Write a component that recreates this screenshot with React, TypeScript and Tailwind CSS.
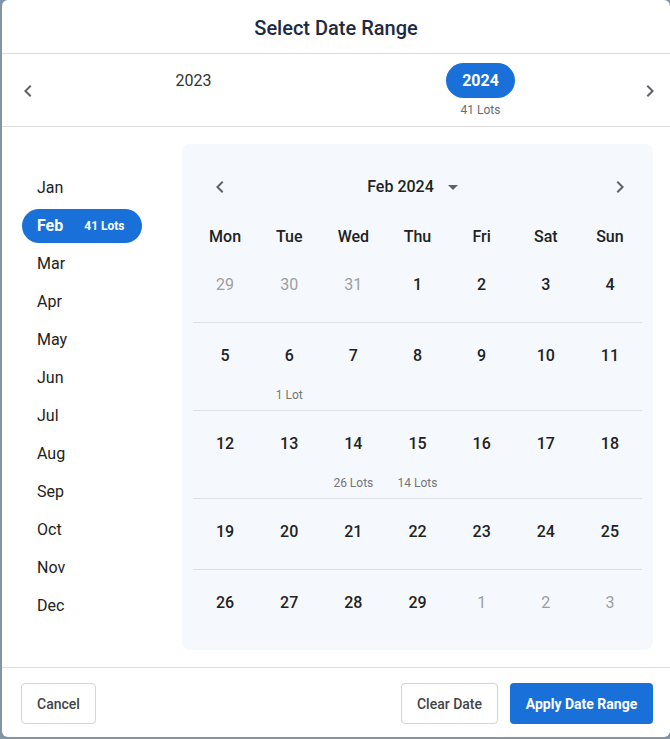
import clsx from 'clsx';

type Day = { d: number; muted?: boolean; lots?: string };

const months = ['Jan', 'Feb', 'Mar', 'Apr', 'May', 'Jun', 'Jul', 'Aug', 'Sep', 'Oct', 'Nov', 'Dec'];
const weekdays = ['Mon', 'Tue', 'Wed', 'Thu', 'Fri', 'Sat', 'Sun'];

const weeks: Day[][] = [
  [{ d: 29, muted: true }, { d: 30, muted: true }, { d: 31, muted: true }, { d: 1 }, { d: 2 }, { d: 3 }, { d: 4 }],
  [{ d: 5 }, { d: 6, lots: '1 Lot' }, { d: 7 }, { d: 8 }, { d: 9 }, { d: 10 }, { d: 11 }],
  [{ d: 12 }, { d: 13 }, { d: 14, lots: '26 Lots' }, { d: 15, lots: '14 Lots' }, { d: 16 }, { d: 17 }, { d: 18 }],
  [{ d: 19 }, { d: 20 }, { d: 21 }, { d: 22 }, { d: 23 }, { d: 24 }, { d: 25 }],
  [{ d: 26 }, { d: 27 }, { d: 28 }, { d: 29 }, { d: 1, muted: true }, { d: 2, muted: true }, { d: 3, muted: true }],
];

function ChevronLeft() {
  return (
    <svg width="24" height="24" viewBox="0 0 24 24" fill="#5f6368">
      <path d="M15.41 7.41L14 6l-6 6 6 6 1.41-1.41L10.83 12z" />
    </svg>
  );
}

function ChevronRight() {
  return (
    <svg width="24" height="24" viewBox="0 0 24 24" fill="#5f6368">
      <path d="M10 6L8.59 7.41 13.17 12l-4.58 4.59L10 18l6-6z" />
    </svg>
  );
}

function ArrowDrop() {
  return (
    <svg width="24" height="24" viewBox="0 0 24 24" fill="#616161">
      <path d="M7 10l5 5 5-5z" />
    </svg>
  );
}

export default function App() {
  return (
    <div className="h-[739px] bg-[#8394a6] pl-[2px] font-['Roboto',sans-serif]">
      <div className="flex h-[737px] w-[668px] flex-col rounded-[6px] bg-white">
        {/* title */}
        <div className="flex h-[54px] items-center justify-center border-b border-[#dedede] pt-[3px]">
          <h2 className="text-[20px] font-medium text-[#1c2b45]">Select Date Range</h2>
        </div>

        {/* years */}
        <div className="flex h-[73px] border-b border-[#dedede]">
          <button className="flex w-[48px] items-center justify-center pl-[4px] pt-[2px]">
            <ChevronLeft />
          </button>
          <div className="grid w-[574px] grid-cols-2">
            <div className="flex flex-col items-center pt-[9px]">
              <div className="flex h-[35px] items-center text-base text-[#333]">2023</div>
            </div>
            <div className="flex flex-col items-center pt-[9px]">
              <div className="flex h-[35px] items-center rounded-full bg-[#1a70d9] px-[16px] text-base font-bold text-white">
                2024
              </div>
              <div className="mt-[4px] text-xs leading-[16px] text-[#6b6b6b]">41 Lots</div>
            </div>
          </div>
          <button className="flex flex-1 items-center pl-[14px] pt-[2px]">
            <ChevronRight />
          </button>
        </div>

        {/* body */}
        <div className="flex flex-1 py-[17px] pl-[20px] pr-[17px]">
          <ul className="w-[160px] pt-[25px]">
            {months.map((m) => (
              <li key={m} className="h-[38px] w-[120px] py-[2px]">
                {m === 'Feb' ? (
                  <div className="flex h-[34px] items-center rounded-full bg-[#1a70d9] px-[15px] text-white">
                    <span className="text-base font-bold">Feb</span>
                    <span className="ml-[21px] text-xs font-bold">41 Lots</span>
                  </div>
                ) : (
                  <div className="flex h-[34px] items-center px-[15px] text-base text-[#222]">{m}</div>
                )}
              </li>
            ))}
          </ul>

          <div className="flex-1 rounded-[8px] bg-[#f5f9fd] px-[11px] pt-[31px]">
            <div className="flex h-[24px] items-center justify-between pl-[15px] pr-[10px]">
              <ChevronLeft />
              <div className="mr-[8px] flex items-center gap-[7px]">
                <span className="text-base font-medium text-[#222]">Feb 2024</span>
                <ArrowDrop />
              </div>
              <ChevronRight />
            </div>

            <div className="mt-[26px] grid h-[24px] grid-cols-7 items-center">
              {weekdays.map((w) => (
                <div key={w} className="text-center text-base font-medium text-[#222]">
                  {w}
                </div>
              ))}
            </div>

            <div className="mt-[3px]">
              {weeks.map((week, i) => {
                const hasLots = week.some((day) => day.lots);
                return (
                  <div
                    key={i}
                    className={clsx(
                      'grid grid-cols-7 pt-[22px]',
                      i < weeks.length - 1 && 'border-b border-[#dde1e5]',
                      hasLots ? 'pb-[7px]' : 'pb-[26px]'
                    )}
                  >
                    {week.map((day, j) => (
                      <div key={j} className="flex flex-col items-center">
                        <span
                          className={clsx(
                            'text-base leading-[22px]',
                            day.muted ? 'text-[#9e9e9e]' : 'font-medium text-[#222]'
                          )}
                        >
                          {day.d}
                        </span>
                        {hasLots && (
                          <span className="mt-[20px] h-[16px] text-xs leading-[16px] text-[#757575]">
                            {day.lots ?? ''}
                          </span>
                        )}
                      </div>
                    ))}
                  </div>
                );
              })}
            </div>
          </div>
        </div>

        {/* footer */}
        <div className="flex items-start border-t border-[#dedede] pb-[13px] pl-[19px] pr-[17px] pt-[15px]">
          <button className="h-[41px] w-[75px] rounded-[4px] border border-[#d4d4d4] text-sm font-medium text-[#444]">
            Cancel
          </button>
          <div className="ml-auto flex gap-[12px]">
            <button className="h-[41px] w-[97px] rounded-[4px] border border-[#d4d4d4] text-sm font-medium text-[#444]">
              Clear Date
            </button>
            <button className="h-[41px] w-[143px] rounded-[4px] bg-[#1a70d9] text-sm font-bold text-white">
              Apply Date Range
            </button>
          </div>
        </div>
      </div>
    </div>
  );
}
